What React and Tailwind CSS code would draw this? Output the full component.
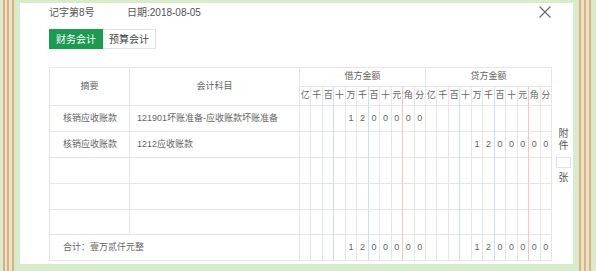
import React from "react";

const units = ["亿", "千", "百", "十", "万", "千", "百", "十", "元", "角", "分"];

const rows = [
  {
    summary: "核销应收账款",
    account: "121901坏账准备-应收账款坏账准备",
    debit: "1200000",
    credit: "",
  },
  { summary: "核销应收账款", account: "1212应收账款", debit: "", credit: "1200000" },
  { summary: "", account: "", debit: "", credit: "" },
  { summary: "", account: "", debit: "", credit: "" },
  { summary: "", account: "", debit: "", credit: "" },
];

// right border colour of a money sub-column
const lineCls = (i) => {
  if (i === 2 || i === 5) return "border-r-[#c7e2f6]";
  if (i === 8) return "border-r-[#f5c4c4]";
  return "border-r-[#e6e6e6]";
};

const cell = "border-b border-r border-b-[#e6e6e6]";

const MoneyCells = ({ amount }) => {
  const digits = Array(11 - amount.length).fill("").concat(amount.split(""));
  return digits.map((d, i) => (
    <div key={i} className={`${cell} ${lineCls(i)} flex items-center justify-center`}>
      {d}
    </div>
  ));
};

const Stripes = ({ side }) => (
  <div className={`flex shrink-0 h-full ${side === "left" ? "w-[20px]" : "w-[23px]"}`}>
    <div className={`h-full w-[2px] bg-[#f3a67c] ${side === "left" ? "ml-[3px]" : "ml-[6px]"}`}></div>
    <div className={`h-full w-[2px] bg-[#f3a67c] ${side === "left" ? "ml-[2px]" : "ml-[3px]"}`}></div>
    <div className="h-full w-[2px] bg-[#f3a67c] ml-[3px]"></div>
  </div>
);

export default function App() {
  return (
    <div className="flex h-[271px] w-[596px] overflow-hidden bg-[#d6edcb] font-['Liberation_Sans','Noto_Sans_CJK_SC',sans-serif]">
      <Stripes side="left" />

      <div className="relative mt-[3px] h-[261px] w-[553px] shrink-0 bg-white pl-[29px]">
        {/* close */}
        <button className="absolute left-[519px] top-[3px] h-[12px] w-[12px]">
          <svg viewBox="0 0 12 12" className="h-[12px] w-[12px]">
            <path d="M0.5 0.5 L11.5 11.5 M11.5 0.5 L0.5 11.5" stroke="#666" strokeWidth="1.1" fill="none" />
          </svg>
        </button>

        <div className="flex h-[18px] items-center text-[10px] text-[#555]">
          <span className="w-[78px]">记字第8号</span>
          <span>日期:2018-08-05</span>
        </div>

        <div className="mt-[8px] flex h-[20px] text-[10px]">
          <div className="flex w-[54px] items-center justify-center bg-[#1b9b50] text-white">财务会计</div>
          <div className="flex w-[53px] items-center justify-center border border-l-0 border-[#e2e2e2] text-[#444]">
            预算会计
          </div>
        </div>

        <div className="mt-[18px] flex">
          <div className="grid w-[503px] grid-cols-[80px_170px_repeat(22,minmax(0,1fr))] grid-rows-[19px_19px_26px_26px_26px_26px_25px_26px] border-l border-t border-[#e6e6e6] text-[9px] text-[#666]">
            <div className={`${cell} border-r-[#e6e6e6] row-span-2 flex items-center justify-center`}>摘要</div>
            <div className={`${cell} border-r-[#e6e6e6] row-span-2 flex items-center justify-center`}>会计科目</div>
            <div className={`${cell} border-r-[#e6e6e6] col-span-11 flex items-center justify-center`}>借方金额</div>
            <div className={`${cell} border-r-[#e6e6e6] col-span-11 flex items-center justify-center`}>贷方金额</div>

            {[...units, ...units].map((u, i) => (
              <div key={i} className={`${cell} ${lineCls(i % 11)} flex items-center justify-center`}>
                {u}
              </div>
            ))}

            {rows.map((row, r) => (
              <React.Fragment key={r}>
                <div className={`${cell} border-r-[#e6e6e6] flex items-center pl-[13px]`}>{row.summary}</div>
                <div className={`${cell} border-r-[#e6e6e6] flex items-center pl-[7px]`}>{row.account}</div>
                <MoneyCells amount={row.debit} />
                <MoneyCells amount={row.credit} />
              </React.Fragment>
            ))}

            <div className={`${cell} border-r-[#e6e6e6] col-span-2 flex items-center pl-[13px]`}>合计：壹万贰仟元整</div>
            <MoneyCells amount="1200000" />
            <MoneyCells amount="1200000" />
          </div>

          <div className="ml-[4px] flex w-[15px] flex-col items-center pt-[61px] text-[10px] leading-[12px] text-[#555]">
            <span>附</span>
            <span>件</span>
            <div className="mt-[5px] h-[11px] w-[15px] border border-[#e2e2e2]"></div>
            <span className="mt-[4px]">张</span>
          </div>
        </div>
      </div>

      <Stripes side="right" />
    </div>
  );
}
